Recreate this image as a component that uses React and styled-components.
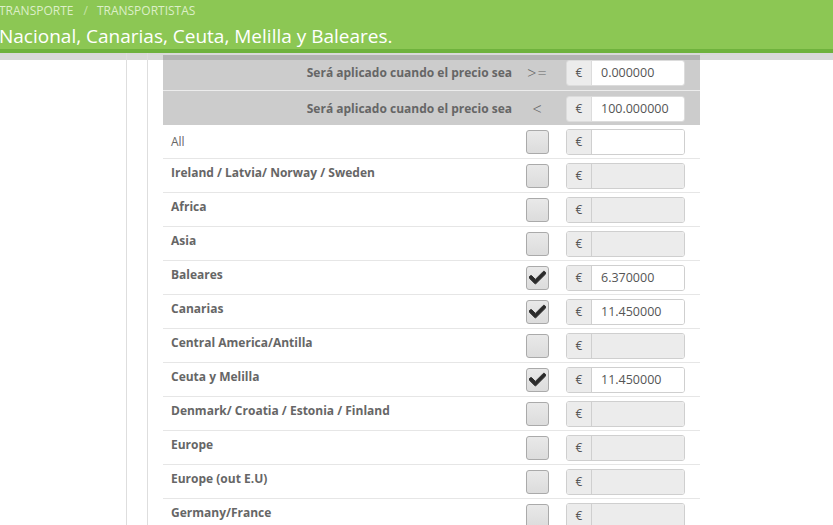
import styled, { createGlobalStyle } from "styled-components";
import { FaCheck } from "react-icons/fa";

const Global = createGlobalStyle`
  html, body {
    margin: 0;
    padding: 0;
    background: #fff;
    overflow: hidden;
  }
  body {
    font-family: "Open Sans", "Liberation Sans", sans-serif;
  }
`;

const Page = styled.div`
  width: 833px;
  height: 525px;
  display: flex;
  flex-direction: column;
  overflow: hidden;
`;

const Header = styled.header`
  flex-shrink: 0;
  height: 49px;
  background: #8cc754;
  border-bottom: 4px solid #6fb23d;
  display: flex;
  flex-direction: column;
`;

const Breadcrumb = styled.div`
  margin-top: 3px;
  height: 16px;
  font-size: 12px;
  line-height: 16px;
  text-transform: uppercase;
  color: #dcefc8;
  white-space: nowrap;
  margin-left: -1px;
  span {
    margin: 0 9px 0 10px;
    color: #c5e3a9;
  }
`;

const Title = styled.h1`
  margin: 4px 0 0 -1px;
  font-size: 19px;
  font-weight: 400;
  line-height: 26px;
  color: #fff;
  white-space: nowrap;
`;

const Body = styled.div`
  flex: 1;
  min-height: 0;
  display: flex;
`;

const Column = styled.div`
  flex-shrink: 0;
  width: ${(p) => p.$w}px;
  flex-grow: ${(p) => (p.$grow ? 1 : 0)};
  border-right: ${(p) => (p.$line ? "1px solid #dedede" : "none")};
  background: linear-gradient(#d9d9d9 0 7px, #fff 7px);
  padding: ${(p) => (p.$pad ? "2px 0 0 15px" : "0")};
`;

const Table = styled.div`
  width: 537px;
  display: flex;
  flex-direction: column;
  & > * {
    flex-shrink: 0;
  }
`;

const HeadRow = styled.div`
  display: grid;
  grid-template-columns: 354px 41px 142px;
  align-items: center;
  height: ${(p) => (p.$first ? 35 : 33)}px;
  background: ${(p) =>
    p.$first ? "linear-gradient(#b3b3b3 0 5px, #cccccc 5px)" : "#cccccc"};
  border-top: ${(p) => (p.$first ? "none" : "1px solid #ececec")};
  padding-top: ${(p) => (p.$first ? "0" : "1px")};
`;

const HeadLabel = styled.div`
  text-align: right;
  padding-right: 5px;
  font-size: 12px;
  font-weight: 700;
  color: #666;
  white-space: nowrap;
`;

const Operator = styled.div`
  text-align: center;
  font-size: 16px;
  color: #666;
  font-weight: 300;
  letter-spacing: 1px;
`;

const Row = styled.div`
  display: grid;
  grid-template-columns: 354px 41px 142px;
  align-items: center;
  height: 33px;
  border-bottom: 1px solid #e6e6e6;
`;

const Label = styled.div`
  padding-left: 8px;
  font-size: 12px;
  font-weight: ${(p) => (p.$plain ? 400 : 700)};
  color: #666;
  white-space: nowrap;
  margin-top: ${(p) => (p.$plain ? "0" : "-6px")};
`;

const CheckCell = styled.div`
  display: flex;
  justify-content: center;
`;

const Checkbox = styled.div`
  width: 21px;
  height: 22px;
  border: 1px solid #aaa;
  border-radius: 3px;
  background: linear-gradient(#e9e9e9, #dcdcdc);
  display: flex;
  align-items: center;
  justify-content: center;
  color: #2b2b2b;
  font-size: 17px;
  svg {
    stroke: currentColor;
    stroke-width: 28px;
  }
`;

const InputCell = styled.div`
  padding-left: 8px;
`;

const Group = styled.div`
  display: flex;
  width: 119px;
  height: 26px;
  box-sizing: border-box;
  border: 1px solid ${(p) => (p.$head ? "#dcdcdc" : "#cfcfcf")};
  border-radius: 3px;
  overflow: hidden;
`;

const Addon = styled.div`
  width: 24px;
  display: flex;
  align-items: center;
  justify-content: center;
  background: #ececec;
  border-right: 1px solid ${(p) => (p.$head ? "#dcdcdc" : "#cfcfcf")};
  font-size: 12px;
  color: #555;
`;

const Field = styled.div`
  flex: 1;
  background: ${(p) => (p.$disabled ? "#ececec" : "#fff")};
  padding-left: 9px;
  display: flex;
  align-items: center;
  font-size: 12.5px;
  color: #555;
`;

const zones = [
  { name: "All", plain: true, value: "" },
  { name: "Ireland / Latvia/ Norway / Sweden" },
  { name: "Africa" },
  { name: "Asia" },
  { name: "Baleares", checked: true, value: "6.370000" },
  { name: "Canarias", checked: true, value: "11.450000" },
  { name: "Central America/Antilla" },
  { name: "Ceuta y Melilla", checked: true, value: "11.450000" },
  { name: "Denmark/ Croatia / Estonia / Finland" },
  { name: "Europe" },
  { name: "Europe (out E.U)" },
  { name: "Germany/France" },
];

const App = () => {
  return (
    <>
      <Global />
      <Page>
        <Header>
          <Breadcrumb>
            Transporte<span>/</span>Transportistas
          </Breadcrumb>
          <Title>Nacional, Canarias, Ceuta, Melilla y Baleares.</Title>
        </Header>
        <Body>
          <Column $w={126} $line />
          <Column $w={20} $line />
          <Column $grow $pad>
            <Table>
              <HeadRow $first>
                <HeadLabel>Será aplicado cuando el precio sea</HeadLabel>
                <Operator>&gt;=</Operator>
                <InputCell>
                  <Group $head>
                    <Addon $head>€</Addon>
                    <Field>0.000000</Field>
                  </Group>
                </InputCell>
              </HeadRow>
              <HeadRow>
                <HeadLabel>Será aplicado cuando el precio sea</HeadLabel>
                <Operator>&lt;</Operator>
                <InputCell>
                  <Group $head>
                    <Addon $head>€</Addon>
                    <Field>100.000000</Field>
                  </Group>
                </InputCell>
              </HeadRow>
              {zones.map((z) => (
                <Row key={z.name}>
                  <Label $plain={z.plain}>{z.name}</Label>
                  <CheckCell>
                    <Checkbox>{z.checked && <FaCheck />}</Checkbox>
                  </CheckCell>
                  <InputCell>
                    <Group>
                      <Addon>€</Addon>
                      <Field $disabled={!z.checked && !z.plain}>
                        {z.value}
                      </Field>
                    </Group>
                  </InputCell>
                </Row>
              ))}
            </Table>
          </Column>
        </Body>
      </Page>
    </>
  );
};

export default App;
